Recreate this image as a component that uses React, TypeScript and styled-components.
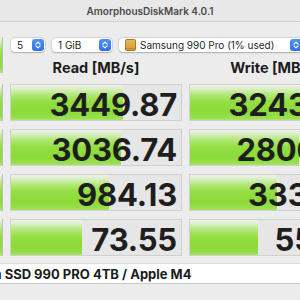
import React from "react";
import styled, { createGlobalStyle } from "styled-components";

const Global = createGlobalStyle`
  html, body {
    margin: 0;
    padding: 0;
    width: 300px;
    height: 300px;
    overflow: hidden;
    background: #ececec;
  }
  body {
    font-family: Inter, "Liberation Sans", sans-serif;
  }
`;

const Window = styled.div`
  width: 300px;
  height: 300px;
  overflow: hidden;
  display: flex;
  flex-direction: column;
  background: #ececec;
`;

const TitleBar = styled.div`
  flex: none;
  height: 21px;
  border-bottom: 1px solid #d3d3d3;
  background: #e8e8e8;
  display: flex;
  align-items: center;
  justify-content: center;
  font-size: 10px;
  font-weight: 600;
  color: #4a4a4a;
  white-space: nowrap;
`;

const Content = styled.div`
  display: flex;
  flex-direction: column;
  padding-top: 15px;
`;

const Grid = styled.div`
  display: grid;
  grid-template-columns: 3px 172px 172px;
  column-gap: 7px;
  row-gap: 8px;
  width: 361px;
`;

const greenGradient = `linear-gradient(180deg, #eff2ec 0%, #dcefc8 10%, #b2e878 26%, #94de44 45%, #8cda38 72%, #96df4a 88%, #b4ea7c 100%)`;

const SideButton = styled.div<{ $tall?: boolean }>`
  box-sizing: border-box;
  height: ${(p) => (p.$tall ? "36px" : "37px")};
  border-right: 1px solid #bdbdbd;
  background: ${greenGradient};
`;

const TopRight = styled.div`
  grid-column: 2 / span 2;
  display: flex;
  flex-direction: column;
  height: 39px;
`;

const Controls = styled.div`
  display: flex;
  gap: 7px;
  margin-top: 1px;
  padding-left: 1px;
  height: 14px;
`;

const Popup = styled.div<{ $w: number }>`
  box-sizing: border-box;
  flex: none;
  width: ${(p) => p.$w}px;
  height: 14px;
  background: #ffffff;
  border-radius: 4px;
  box-shadow: 0 0 0 0.5px rgba(0, 0, 0, 0.12), 0 0.5px 1.5px rgba(0, 0, 0, 0.22);
  display: flex;
  align-items: center;
  gap: 4px;
  padding: 0 1px 0 6px;
  font-size: 10px;
  color: #262626;
  white-space: nowrap;
`;

const PopupLabel = styled.span`
  flex: 1;
  line-height: 14px;
`;

const Headers = styled.div`
  display: flex;
  gap: 7px;
  margin-top: 7px;
`;

const HeaderCell = styled.div`
  width: 172px;
  text-align: center;
  font-size: 14.5px;
  font-weight: 700;
  line-height: 17px;
  color: #1c1c1c;
  white-space: nowrap;
`;

const ResultCell = styled.div`
  box-sizing: border-box;
  height: 37px;
  border: 1px solid #d0d0d0;
  background: #e6e6e6;
  display: grid;
  overflow: hidden;
`;

const Bar = styled.div`
  grid-area: 1 / 1;
  height: 100%;
  justify-self: start;
  background: ${greenGradient};
`;

const Value = styled.div`
  grid-area: 1 / 1;
  justify-self: end;
  align-self: center;
  padding-right: 4px;
  padding-top: 2px;
  font-size: 31px;
  font-weight: 700;
  line-height: 35px;
  color: #1e1e1e;
  letter-spacing: -0.2px;
  white-space: nowrap;
`;

const Footer = styled.div`
  box-sizing: border-box;
  margin-top: 7px;
  height: 21px;
  background: #ffffff;
  border-top: 1px solid #dadada;
  border-bottom: 1px solid #c8c8c8;
  display: flex;
  align-items: center;
  font-size: 13px;
  font-weight: 700;
  color: #1c1c1c;
  white-space: nowrap;
  text-indent: -6px;
  overflow: hidden;
`;

const Stepper = () => (
  <svg width="12" height="12" viewBox="0 0 12 12" style={{ flex: "none" }}>
    <defs>
      <linearGradient id="stp" x1="0" y1="0" x2="0" y2="1">
        <stop offset="0" stopColor="#4f93f8" />
        <stop offset="1" stopColor="#2d6ff0" />
      </linearGradient>
    </defs>
    <rect x="0" y="0" width="12" height="12" rx="3" fill="url(#stp)" />
    <path d="M4 5 L6 3.1 L8 5" fill="none" stroke="#fff" strokeWidth="1.2" strokeLinecap="round" strokeLinejoin="round" />
    <path d="M4 7 L6 8.9 L8 7" fill="none" stroke="#fff" strokeWidth="1.2" strokeLinecap="round" strokeLinejoin="round" />
  </svg>
);

const DriveIcon = () => (
  <svg width="11" height="12" viewBox="0 0 11 12" style={{ flex: "none" }}>
    <defs>
      <linearGradient id="drv" x1="0" y1="0" x2="0" y2="1">
        <stop offset="0" stopColor="#eab955" />
        <stop offset="1" stopColor="#d39a32" />
      </linearGradient>
    </defs>
    <rect x="0.5" y="0.5" width="10" height="11" rx="1.2" fill="url(#drv)" stroke="#9c7022" strokeWidth="0.9" />
    <line x1="1" y1="9.6" x2="10" y2="9.6" stroke="#b8842b" strokeWidth="0.8" />
  </svg>
);

const rows = [
  { read: 3449.87, write: 3243.52 },
  { read: 3036.74, write: 2806.19 },
  { read: 984.13, write: 333.36 },
  { read: 73.55, write: 55.41 },
];

const barWidth = (v: number) => Math.max(0, 24.5 * Math.log10(v) + 25);

const Result = ({ value }: { value: number }) => (
  <ResultCell>
    <Bar style={{ width: `${barWidth(value)}px` }} />
    <Value>{value.toFixed(2)}</Value>
  </ResultCell>
);

export default function App() {
  return (
    <>
      <Global />
      <Window>
        <TitleBar>AmorphousDiskMark 4.0.1</TitleBar>
        <Content>
          <Grid>
            <SideButton $tall />
            <TopRight>
              <Controls>
                <Popup $w={34}>
                  <PopupLabel>5</PopupLabel>
                  <Stepper />
                </Popup>
                <Popup $w={60}>
                  <PopupLabel>1 GiB</PopupLabel>
                  <Stepper />
                </Popup>
                <Popup $w={184}>
                  <DriveIcon />
                  <PopupLabel>Samsung 990 Pro (1% used)</PopupLabel>
                  <Stepper />
                </Popup>
              </Controls>
              <Headers>
                <HeaderCell>Read [MB/s]</HeaderCell>
                <HeaderCell>Write [MB/s]</HeaderCell>
              </Headers>
            </TopRight>
            {rows.map((r, i) => (
              <React.Fragment key={i}>
                <SideButton />
                <Result value={r.read} />
                <Result value={r.write} />
              </React.Fragment>
            ))}
          </Grid>
          <Footer>a SSD 990 PRO 4TB / Apple M4</Footer>
        </Content>
      </Window>
    </>
  );
}
